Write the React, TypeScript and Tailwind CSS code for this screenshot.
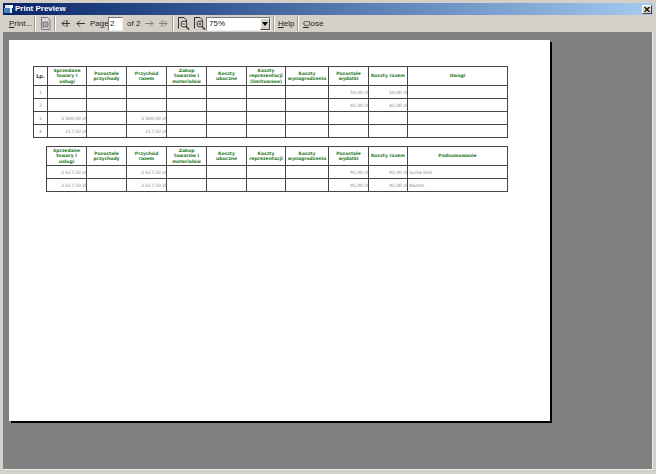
import React from "react";

const colWidths = [14, 39, 40, 40, 40, 40, 39, 43, 40, 39, 100];
const colWidths2 = [40, 40, 40, 40, 40, 39, 43, 40, 39, 100];

const headers = [
  "Sprzedane towary i usługi",
  "Pozostałe przychody",
  "Przychód razem",
  "Zakup towarów i materiałów",
  "Koszty uboczne",
  "Koszty reprezentacji (limitowane)",
  "Koszty wynagrodzenia",
  "Pozostałe wydatki",
  "Koszty razem",
];
const headers2 = [...headers];
headers2[5] = "Koszty reprezentacji";

const rows = [
  ["1", "", "", "", "", "", "", "", "50,00 zł", "50,00 zł", ""],
  ["2", "", "", "", "", "", "", "", "45,00 zł", "45,00 zł", ""],
  ["3", "3 500,00 zł", "", "3 500,00 zł", "", "", "", "", "", "", ""],
  ["4", "117,50 zł", "", "117,50 zł", "", "", "", "", "", "", ""],
];
const rows2 = [
  ["3 617,50 zł", "", "3 617,50 zł", "", "", "", "", "95,00 zł", "95,00 zł", "Suma bilsi"],
  ["3 617,50 zł", "", "3 617,50 zł", "", "", "", "", "95,00 zł", "95,00 zł", "Razem"],
];

function Sep() {
  return <div className="w-[2px] h-[15px] border-l border-l-[#9c9a94] border-r border-r-white" />;
}

function Arrow({ flip, double }: { flip?: boolean; double?: boolean }) {
  return (
    <svg width="10" height="9" viewBox="0 0 10 9" className={flip ? "-scale-x-100" : ""} fill="none" stroke="#333" strokeWidth="1">
      <path d="M1 4.5H9M4 1.5L1 4.5L4 7.5" />
      {double && <path d="M6 1V8" />}
    </svg>
  );
}

function PageIcon({ plus }: { plus?: boolean }) {
  return (
    <svg width="14" height="15" viewBox="0 0 14 15" fill="none" stroke="#333" strokeWidth="1">
      <path d="M2.5 12.5V1.5H8L10.5 4V6" />
      <circle cx="8" cy="8" r="3" fill="#e8e8e0" />
      <path d="M10 10.5L13 13.5" strokeWidth="1.5" />
      {plus && <path d="M6.5 8H9.5M8 6.5V9.5" />}
      {!plus && <path d="M6.5 8H9.5" />}
    </svg>
  );
}

function PrintIcon() {
  return (
    <svg width="13" height="15" viewBox="0 0 13 15" fill="none" stroke="#77757a" strokeWidth="1">
      <path d="M2.5 13.5V1.5H8.5L11 4V13.5Z" fill="#dcdcdc" />
      <rect x="4" y="6" width="5" height="5" fill="#a9a9a9" />
    </svg>
  );
}

function DataTable({ lead, heads, widths, last, data }: { lead?: string; heads: string[]; widths: number[]; last: string; data: string[][] }) {
  return (
    <table className="table-fixed border-collapse border border-[#333]" style={{ width: widths.reduce((a, b) => a + b, 0) }}>
      <colgroup>
        {widths.map((w, i) => (
          <col key={i} style={{ width: w }} />
        ))}
      </colgroup>
      <thead>
        <tr className="h-[19px]">
          {lead && <th className="border border-[#444] p-0 text-[5px] leading-[6px] font-bold text-[#333]">{lead}</th>}
          {heads.map((h) => (
            <th key={h} className="border border-[#444] p-0 px-[1px] text-[4.5px] leading-[5.5px] font-bold text-[#1f7a1f]">
              {h}
            </th>
          ))}
          <th className="border border-[#444] p-0 text-[4.5px] leading-[5.5px] font-bold text-[#1f7a1f]">{last}</th>
        </tr>
      </thead>
      <tbody>
        {data.map((row, r) => (
          <tr key={r} className="h-[13px]">
            {row.map((c, i) => {
              const isLead = lead && i === 0;
              const isLast = i === row.length - 1;
              return (
                <td
                  key={i}
                  className={`border border-[#444] p-0 text-[4.5px] leading-[5px] text-[#8a8a8a] overflow-hidden whitespace-nowrap ${
                    isLead ? "text-center" : isLast ? "text-left pl-[1px]" : "text-right"
                  }`}
                >
                  {c}
                </td>
              );
            })}
          </tr>
        ))}
      </tbody>
    </table>
  );
}

export default function App() {
  return (
    <div className="w-[656px] h-[474px] bg-[#d4d0c8] flex flex-col overflow-hidden pt-[3px] pl-[3px] pr-[3px] pb-[4px] font-['Liberation_Sans',sans-serif] text-[#222]">
      <div className="h-[12px] flex items-center justify-between bg-gradient-to-r from-[#0a246a] to-[#a6caf0] pl-[1px] pr-[1px] shrink-0">
        <div className="flex items-center gap-[1px]">
          <svg width="10" height="10" viewBox="0 0 10 10">
            <rect x="1" y="1" width="7" height="8" fill="#dfe8f5" />
            <rect x="0" y="4" width="6" height="5" fill="#4a7fc0" />
            <rect x="5" y="1" width="4" height="3" fill="#fff" />
          </svg>
          <span className="text-[8px] leading-none font-bold text-white">Print Preview</span>
        </div>
        <button className="w-[10px] h-[9px] bg-[#d4d0c8] border border-t-white border-l-white border-r-[#404040] border-b-[#404040] flex items-center justify-center">
          <svg width="6" height="5" viewBox="0 0 6 5" stroke="#000" strokeWidth="1.1">
            <path d="M0.5 0L5.5 5M5.5 0L0.5 5" />
          </svg>
        </button>
      </div>

      <div className="h-[17px] flex items-center pl-[6px] text-[8px] whitespace-nowrap shrink-0">
        <span className="w-[25px]"><u>P</u>rint...</span>
        <Sep />
        <span className="ml-[3px] mr-[2px] flex"><PrintIcon /></span>
        <Sep />
        <span className="ml-[5px] flex"><Arrow double /></span>
        <span className="ml-[5px] flex"><Arrow /></span>
        <span className="ml-[4px] w-[18px]">Pa<u>g</u>e</span>
        <div className="w-[15px] h-[14px] bg-white border border-t-[#777] border-l-[#777] border-r-[#eee] border-b-[#eee] flex items-center pl-[1px] text-[8px]">2</div>
        <span className="ml-[4px] w-[12px]">of 2</span>
        <span className="ml-[5px] flex opacity-50"><Arrow flip /></span>
        <span className="ml-[4px] flex opacity-50"><Arrow flip double /></span>
        <span className="ml-[4px]"><Sep /></span>
        <span className="ml-[2px] flex"><PageIcon /></span>
        <span className="ml-[2px] flex"><PageIcon plus /></span>
        <div className="w-[65px] h-[14px] bg-white border border-t-[#777] border-l-[#777] border-r-[#eee] border-b-[#eee] flex items-center justify-between pl-[2px] text-[8px]">
          75%
          <div className="w-[10px] h-[12px] bg-[#d4d0c8] border border-t-white border-l-white border-r-[#404040] border-b-[#404040] flex items-center justify-center">
            <div className="border-x-[3px] border-x-transparent border-t-[4px] border-t-black" />
          </div>
        </div>
        <span className="ml-[2px]"><Sep /></span>
        <span className="ml-[3px] w-[14px]"><u>H</u>elp</span>
        <span className="ml-[5px]"><Sep /></span>
        <span className="ml-[4px]"><u>C</u>lose</span>
      </div>

      <div className="flex-1 bg-[#808080] pl-[6px] pt-[8px] border-r border-b border-[#eee] min-h-0 font-['DejaVu_Sans',sans-serif]">
        <div className="w-[541px] h-[381px] bg-white shadow-[2px_2px_0_#000] pt-[26px] pl-[24px] flex flex-col">
          <DataTable lead="Lp." heads={headers} widths={colWidths} last="Uwagi" data={rows} />
          <div className="mt-[8px] ml-[13px]">
            <DataTable heads={headers2} widths={colWidths2} last="Podsumowanie" data={rows2} />
          </div>
        </div>
      </div>
    </div>
  );
}
